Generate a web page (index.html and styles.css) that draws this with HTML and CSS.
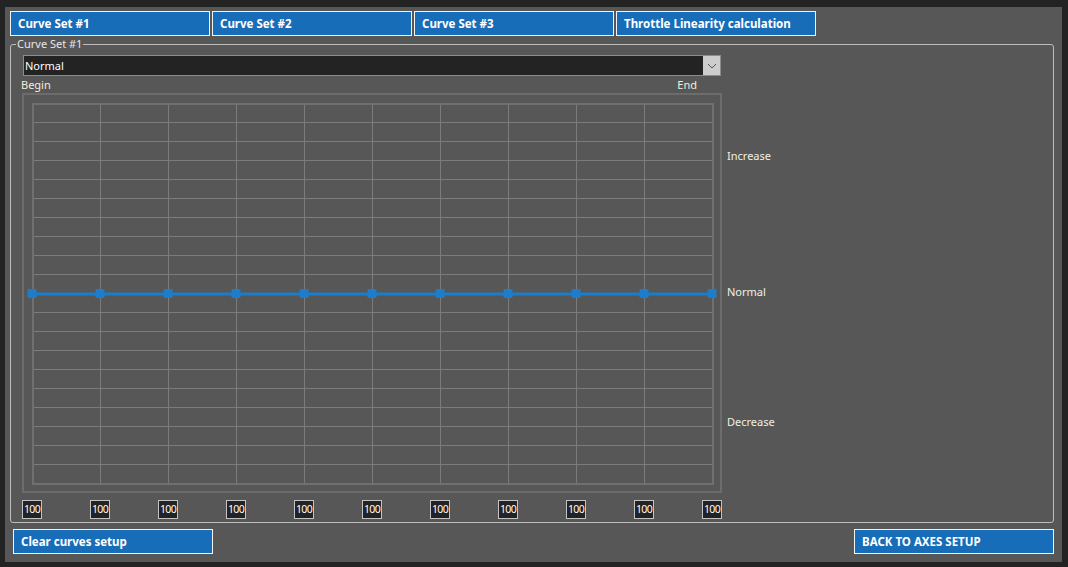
FILE: index.html
```html
<!DOCTYPE html>
<html>
<head>
<meta charset="utf-8">
<link rel="stylesheet" href="styles.css">
</head>
<body>
<div class="panel">
  <div class="tabs">
    <div class="tab">Curve Set #1</div>
    <div class="tab">Curve Set #2</div>
    <div class="tab">Curve Set #3</div>
    <div class="tab">Throttle Linearity calculation</div>
  </div>
  <div class="group">
    <span class="legend">Curve Set #1</span>
    <div class="select">
      <span class="select-text">Normal</span>
      <span class="select-btn">
        <svg width="10" height="6" viewBox="0 0 10 6"><path d="M1 1 L5 5 L9 1" fill="none" stroke="#555" stroke-width="1"/></svg>
      </span>
    </div>
    <div class="ends"><span>Begin</span><span>End</span></div>
    <div class="chart-row">
      <svg class="chart" width="700" height="400" viewBox="0 0 700 400">
        <rect x="1" y="1" width="698" height="398" fill="none" stroke="#6c6c6c" stroke-width="2"/>
        <g stroke="#7c7c7c" stroke-width="1" id="grid"></g>
        <rect x="11" y="11" width="680" height="380" fill="none" stroke="#707070" stroke-width="2"/>
        <line x1="10" y1="201" x2="690" y2="201" stroke="#1b7dcc" stroke-width="3"/>
        <g fill="#1b7dcc" id="marks"></g>
      </svg>
      <div class="side">
        <span class="lab lab-inc">Increase</span>
        <span class="lab lab-norm">Normal</span>
        <span class="lab lab-dec">Decrease</span>
      </div>
    </div>
    <div class="values">
      <span class="val">100</span><span class="val">100</span><span class="val">100</span><span class="val">100</span><span class="val">100</span><span class="val">100</span><span class="val">100</span><span class="val">100</span><span class="val">100</span><span class="val">100</span><span class="val">100</span>
    </div>
  </div>
  <div class="bottom">
    <div class="btn">Clear curves setup</div>
    <div class="btn">BACK TO AXES SETUP</div>
  </div>
</div>
<script>
  var ns = "http://www.w3.org/2000/svg";
  var g = document.getElementById("grid");
  for (var k = 1; k < 10; k++) {
    var l = document.createElementNS(ns, "line");
    var x = 10 + 68 * k + 0.5;
    l.setAttribute("x1", x); l.setAttribute("x2", x);
    l.setAttribute("y1", 10); l.setAttribute("y2", 390);
    g.appendChild(l);
  }
  for (var j = 1; j < 20; j++) {
    var h = document.createElementNS(ns, "line");
    var y = 10 + 19 * j + 0.5;
    h.setAttribute("x1", 10); h.setAttribute("x2", 690);
    h.setAttribute("y1", y); h.setAttribute("y2", y);
    g.appendChild(h);
  }
  var m = document.getElementById("marks");
  for (var i = 0; i <= 10; i++) {
    var r = document.createElementNS(ns, "rect");
    r.setAttribute("x", 10 + 68 * i - 4.5);
    r.setAttribute("y", 196);
    r.setAttribute("width", 9); r.setAttribute("height", 9);
    r.setAttribute("rx", 1);
    m.appendChild(r);
  }
</script>
</body>
</html>
```

FILE: styles.css
```css
html, body {
  margin: 0;
  padding: 0;
  background: #232323;
  font-family: "Noto Sans", "DejaVu Sans", sans-serif;
  color: #eeeeee;
}
.panel {
  box-sizing: border-box;
  margin: 7px 6px 0 5px;
  width: 1057px;
  height: 555px;
  background: #575757;
  padding: 4px 8px 0 5px;
}
.tabs {
  display: flex;
  gap: 2px;
}
.tab, .btn {
  box-sizing: border-box;
  width: 200px;
  height: 25px;
  background: #186db8;
  border: 1px solid #f2f2f2;
  color: #ffffff;
  font-weight: bold;
  font-size: 11.5px;
  line-height: 24px;
  padding-left: 7px;
  white-space: nowrap;
}
.group {
  position: relative;
  box-sizing: border-box;
  margin-top: 8px;
  height: 479px;
  border: 1px solid #bdbdbd;
  border-radius: 3px;
  padding: 10px 0 0 11px;
}
.legend {
  position: absolute;
  left: 5px;
  top: -8px;
  background: #575757;
  padding: 0 1px;
  font-size: 11px;
  line-height: 14px;
  color: #e6e6e6;
}
.select {
  box-sizing: border-box;
  margin-left: 1px;
  width: 698px;
  height: 21px;
  background: #232323;
  border: 1px solid #8c8c8c;
  display: flex;
  align-items: stretch;
}
.select-text {
  flex: 1;
  font-size: 11px;
  line-height: 19px;
  padding-left: 1px;
  color: #ffffff;
}
.select-btn {
  width: 17px;
  background: #cdcdcd;
  display: flex;
  align-items: center;
  justify-content: center;
}
.ends {
  box-sizing: border-box;
  width: 676px;
  height: 17px;
  padding-top: 1px;
  display: flex;
  justify-content: space-between;
  font-size: 11px;
  line-height: 16px;
  margin-left: -1px;
  color: #f2eedc;
}
.chart-row {
  display: flex;
}
.chart {
  display: block;
  flex: none;
}
.side {
  display: flex;
  flex-direction: column;
  padding-left: 5px;
  font-size: 11px;
  line-height: 13px;
  color: #f2f0e4;
}
.lab-inc { margin-top: 56px; }
.lab-norm { margin-top: 123px; }
.lab-dec { margin-top: 117px; }
.values {
  display: flex;
  gap: 48px;
  margin-top: 7px;
}
.val {
  box-sizing: border-box;
  width: 20px;
  height: 19px;
  background: #232323;
  border: 1px solid #c4c4c4;
  font-size: 10.5px;
  line-height: 17px;
  text-align: center;
  color: #ffffff;
  letter-spacing: -0.6px;
}
.bottom {
  display: flex;
  justify-content: space-between;
  margin-top: 6px;
  padding-left: 3px;
}
```
